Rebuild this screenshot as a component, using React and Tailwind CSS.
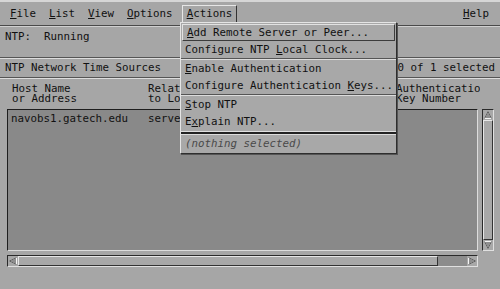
import React from 'react'

const mono = { fontFamily: '"DejaVu Sans Mono", "Liberation Mono", monospace' }

// underlined mnemonic letter
function M({ text, at = 0 }) {
  return (
    <span className="whitespace-pre">
      {text.slice(0, at)}
      <span className="underline underline-offset-[1px] decoration-1">{text[at]}</span>
      {text.slice(at + 1)}
    </span>
  )
}

function Etch() {
  return (
    <div className="flex flex-col">
      <div className="h-px bg-[#555]" />
      <div className="h-px bg-[#dcdcdc]" />
    </div>
  )
}

function MenuItem({ children, active }) {
  return (
    <div
      className={`h-[17px] flex items-center pl-[4px] ${
        active
          ? 'mx-[1px] border border-t-[#e2e2e2] border-l-[#e2e2e2] border-r-[#3c3c3c] border-b-[#3c3c3c] pl-[3px]'
          : ''
      }`}
    >
      {children}
    </div>
  )
}

function Arrow({ dir }) {
  const pts = {
    up: '1.5,8.5 5,1.5 8.5,8.5',
    down: '1.5,1.5 5,8.5 8.5,1.5',
    left: '8.5,1.5 1.5,5 8.5,8.5',
    right: '1.5,1.5 8.5,5 1.5,8.5',
  }[dir]
  return (
    <svg width="10" height="10" viewBox="0 0 10 10" className="block shrink-0 bg-[#a8a8a8]">
      <polygon points={pts} fill="#8e8e8e" stroke="#f4f4f4" strokeWidth="1" />
      <polyline points={pts} fill="none" stroke="#222" strokeWidth="0.7" />
    </svg>
  )
}

export default function App() {
  return (
    <div
      style={mono}
      className="relative w-[500px] h-[289px] overflow-hidden bg-[#a6a6a6] text-[#111] text-[10.8px] leading-[10px]"
    >
      {/* Menu bar */}
      <div className="h-[26px] flex items-center border-t-2 border-t-[#d6d6d6] border-b border-b-[#4a4a4a] pl-[10px] pr-[11px]">
        <div className="flex items-center gap-[13px]">
          <M text="File" />
          <M text="List" />
          <M text="View" />
          <M text="Options" />
        </div>
        <div className="ml-[9px] mt-[1px] h-[18px] flex items-center px-[4px] border border-t-[#e6e6e6] border-l-[#e6e6e6] border-r-[#333] border-b-[#333]">
          <M text="Actions" />
        </div>
        <div className="ml-auto">
          <M text="Help" />
        </div>
      </div>

      {/* Status */}
      <div className="h-[31px] pl-[5px] pt-[5px] border-t border-t-[#d0d0d0] whitespace-pre">
        NTP:  Running
      </div>
      <Etch />

      {/* Title row */}
      <div className="h-[18px] flex items-center pl-[5px] pr-[5px]">
        <span>NTP Network Time Sources</span>
        <span className="ml-auto">0 of 1 selected</span>
      </div>
      <Etch />

      {/* Column headers (middle part hidden by the open menu) */}
      <div className="h-[30px] pt-[5px] w-[480px] overflow-hidden flex whitespace-pre">
        <div className="w-[148px] pl-[12px] shrink-0">Host Name{'\n'}or Address</div>
        <div className="w-[32px] overflow-hidden shrink-0">Relationship{'\n'}to Local Host</div>
        <div className="w-[217px] shrink-0" />
        <div className="shrink-0 -ml-[1px]">Authentication{'\n'}Key Number</div>
      </div>

      {/* List + vertical scrollbar */}
      <div className="flex gap-[4px] pl-[7px]">
        <div className="w-[471px] h-[142px] bg-[#898989] border border-t-[#1e1e1e] border-l-[#1e1e1e] border-r-[#dcdcdc] border-b-[#dcdcdc] pt-[4px]">
          <div className="flex h-[10px] items-center whitespace-pre">
            <span className="w-[140px] pl-[3px] shrink-0">navobs1.gatech.edu</span>
            <span className="w-[32px] overflow-hidden shrink-0">server</span>
          </div>
        </div>
        <div className="w-[12px] h-[142px] bg-[#8c8c8c] border border-t-[#2a2a2a] border-l-[#2a2a2a] border-r-[#e0e0e0] border-b-[#e0e0e0] flex flex-col items-center overflow-hidden">
          <Arrow dir="up" />
          <div className="w-full flex-1 bg-[#a8a8a8] border border-t-[#e6e6e6] border-l-[#e6e6e6] border-r-[#333] border-b-[#333]" />
          <Arrow dir="down" />
        </div>
      </div>

      {/* Horizontal scrollbar */}
      <div className="ml-[7px] mt-[4px] w-[471px] h-[12px] bg-[#8c8c8c] border border-t-[#2a2a2a] border-l-[#2a2a2a] border-r-[#e0e0e0] border-b-[#e0e0e0] flex items-center">
        <Arrow dir="left" />
        <div className="w-[420px] h-full bg-[#a8a8a8] border border-t-[#e6e6e6] border-l-[#e6e6e6] border-r-[#333] border-b-[#333]" />
        <div className="flex-1" />
        <Arrow dir="right" />
      </div>

      {/* Actions dropdown */}
      <div className="absolute left-[180px] top-[22px] w-[217px] bg-[#a8a8a8] border border-t-[#e4e4e4] border-l-[#e4e4e4] border-r-[#2e2e2e] border-b-[#2e2e2e] shadow-[1px_1px_0_#555] flex flex-col pt-px">
        <MenuItem active><M text="Add Remote Server or Peer..." /></MenuItem>
        <MenuItem><M text="Configure NTP Local Clock..." at={14} /></MenuItem>
        <Etch />
        <MenuItem><M text="Enable Authentication" /></MenuItem>
        <MenuItem><M text="Configure Authentication Keys..." at={25} /></MenuItem>
        <Etch />
        <MenuItem><M text="Stop NTP" /></MenuItem>
        <MenuItem><M text="Explain NTP..." at={1} /></MenuItem>
        <div className="mt-px flex flex-col">
          <div className="h-px bg-[#e0e0e0]" />
          <div className="h-[2px] bg-[#222]" />
          <div className="h-px bg-[#dcdcdc]" />
        </div>
        <div className="h-[18px] flex items-center pl-[4px] text-[#4a4a4a] italic">
          (nothing selected)
        </div>
      </div>
    </div>
  )
}
